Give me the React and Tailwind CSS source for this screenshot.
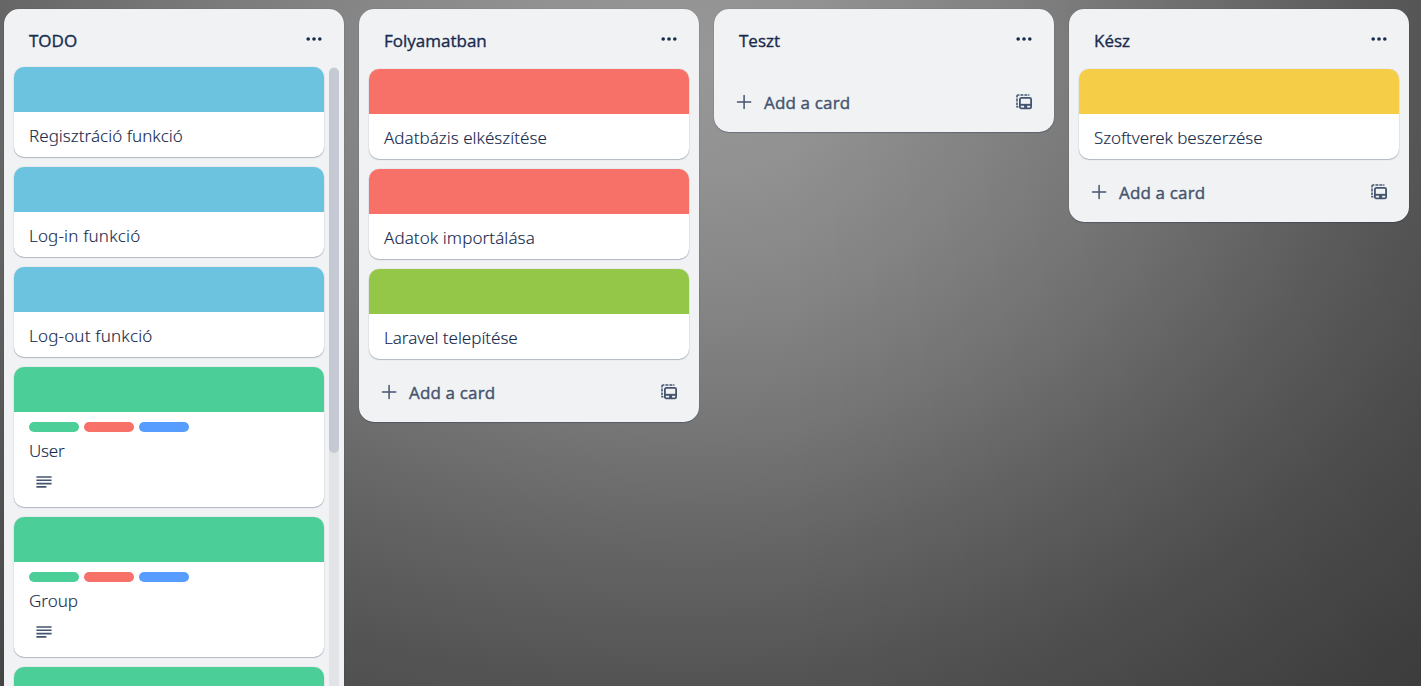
const covers = {
  sky: "bg-[#6cc3e0]",
  red: "bg-[#f87168]",
  lime: "bg-[#94c748]",
  green: "bg-[#4bce97]",
  yellow: "bg-[#f5cd47]",
};

const lists = [
  {
    title: "TODO",
    scroll: true,
    cards: [
      { title: "Regisztráció funkció", cover: "sky", tracking: "tracking-[0.03px]" },
      { title: "Log-in funkció", cover: "sky", tracking: "tracking-[0.17px]" },
      { title: "Log-out funkció", cover: "sky", tracking: "tracking-[0.18px]" },
      { title: "User", cover: "green", tracking: "tracking-[-0.25px]", labels: true },
      { title: "Group", cover: "green", tracking: "tracking-normal", labels: true },
      { title: "", cover: "green", tracking: "tracking-normal", labels: true },
    ],
  },
  {
    title: "Folyamatban",
    cards: [
      { title: "Adatbázis elkészítése", cover: "red", tracking: "tracking-[0.02px]" },
      { title: "Adatok importálása", cover: "red", tracking: "tracking-[0.08px]" },
      { title: "Laravel telepítése", cover: "lime", tracking: "tracking-[-0.03px]" },
    ],
  },
  { title: "Teszt", cards: [] },
  {
    title: "Kész",
    cards: [{ title: "Szoftverek beszerzése", cover: "yellow", tracking: "tracking-[-0.08px]" }],
  },
];

function DotsIcon() {
  return (
    <svg className="h-4 w-4" viewBox="0 0 16 16" fill="#172b4d">
      <circle cx="2.2" cy="8" r="1.8" />
      <circle cx="8" cy="8" r="1.8" />
      <circle cx="13.8" cy="8" r="1.8" />
    </svg>
  );
}

function PlusIcon() {
  return (
    <svg className="h-4 w-4" viewBox="0 0 16 16" stroke="#44546f" strokeWidth="1.5" strokeLinecap="round">
      <path d="M8.1 1.4v13.2M1.5 8h13.2" />
    </svg>
  );
}

function TemplateIcon() {
  return (
    <svg className="h-4 w-4" viewBox="0 0 16 16" fill="none" stroke="#44546f">
      <path
        d="M1 3.4V2.2Q1 1 2.2 1h1.2M4.4 1h3M8.4 1h3M12.2 1h1.2M1 4.4v3M1 8.4v2.6M1 11.8v1h1.4"
        strokeWidth="1.6"
      />
      <rect x="3.9" y="3.9" width="11.2" height="10.4" rx="1.4" strokeWidth="1.8" />
      <path d="M4 10.8h11" strokeWidth="1.9" />
      <path d="M9.6 11v3.4" strokeWidth="3" />
    </svg>
  );
}

function DescriptionIcon() {
  return (
    <svg className="h-4 w-4" viewBox="0 0 16 16" stroke="#44546f" strokeWidth="1.6">
      <path d="M.4 3h15.2M.4 6.3h15.2M.4 9.6h15.2M.4 12.9h10" />
    </svg>
  );
}

function Card({ card }) {
  return (
    <article
      className={`shrink-0 overflow-hidden rounded-[10px] bg-white shadow-[0_1px_1px_#091e4240,0_0_1px_#091e424f] ${
        card.labels ? "h-[140px]" : "h-[90px]"
      }`}
    >
      <div className={`h-[45px] ${covers[card.cover]}`} />
      <div className={`px-[15px] ${card.labels ? "pt-[10px]" : "pt-[11px]"}`}>
        {card.labels && (
          <div className="mb-1.5 flex gap-[5px]">
            <span className="h-[10px] w-[50px] rounded-full bg-[#4bce97]" />
            <span className="h-[10px] w-[50px] rounded-full bg-[#f87168]" />
            <span className="h-[10px] w-[50px] rounded-full bg-[#579dff]" />
          </div>
        )}
        <p className={`h-[25px] text-[17px] leading-[25px] font-light [-webkit-text-stroke:0.12px_#172b4d] ${card.tracking}`}>
          {card.title}
        </p>
        {card.labels && (
          <div className="mt-[11px] ml-[7px]">
            <DescriptionIcon />
          </div>
        )}
      </div>
    </article>
  );
}

function List({ list }) {
  return (
    <section
      className={`flex w-[340px] shrink-0 flex-col rounded-[15px] bg-[#f1f2f4] shadow-[0_1px_1px_#091e4240,0_0_1px_#091e424f] ${
        list.scroll ? "h-[720px]" : ""
      }`}
    >
      <header
        className={`flex shrink-0 items-start justify-between pr-[22px] pl-[25px] ${
          list.scroll ? "h-[58px]" : "h-[60px]"
        }`}
      >
        <h2 className="pt-[19px] font-['Open_Sans'] text-[17px] leading-[25px] [-webkit-text-stroke:0.35px_#172b4d]">
          {list.title}
        </h2>
        <button className="pt-[22px]" aria-label="Menu">
          <DotsIcon />
        </button>
      </header>
      <div className="flex min-h-0 gap-[5px] pr-[5px] pl-[10px]">
        <div className={`flex min-w-0 flex-1 flex-col gap-[10px] ${list.scroll ? "" : "pr-[5px]"}`}>
          {list.cards.map((card, i) => (
            <Card key={i} card={card} />
          ))}
        </div>
        {list.scroll && (
          <div className="w-[10px] rounded-full bg-[#e3e4e8] pt-px">
            <div className="h-[385px] rounded-full bg-[#c4c9d3]" />
          </div>
        )}
      </div>
      {!list.scroll && (
        <footer className="flex h-[63px] items-center pt-[3px] pr-[22px] pl-[22px] text-[#44546f]">
          <PlusIcon />
          <span className="ml-3 font-['Open_Sans'] text-[17px] leading-[25px] tracking-[0.16px] [-webkit-text-stroke:0.4px_#44546f]">
            Add a card
          </span>
          <span className="ml-auto">
            <TemplateIcon />
          </span>
        </footer>
      )}
    </section>
  );
}

export default function App() {
  return (
    <main className="flex h-[686px] items-start gap-[15px] overflow-hidden bg-[linear-gradient(to_right,transparent_55%,rgba(0,0,0,0.13)_100%),radial-gradient(1300px_900px_at_690px_60px,#979797_0%,#929292_12%,#868686_26%,#767676_41%,#656565_54%,#545454_69%,#464646_87%,#424242_100%)] pt-[9px] pl-1 font-['Noto_Sans',sans-serif] text-[#172b4d]">
      {lists.map((list) => (
        <List key={list.title} list={list} />
      ))}
    </main>
  );
}
